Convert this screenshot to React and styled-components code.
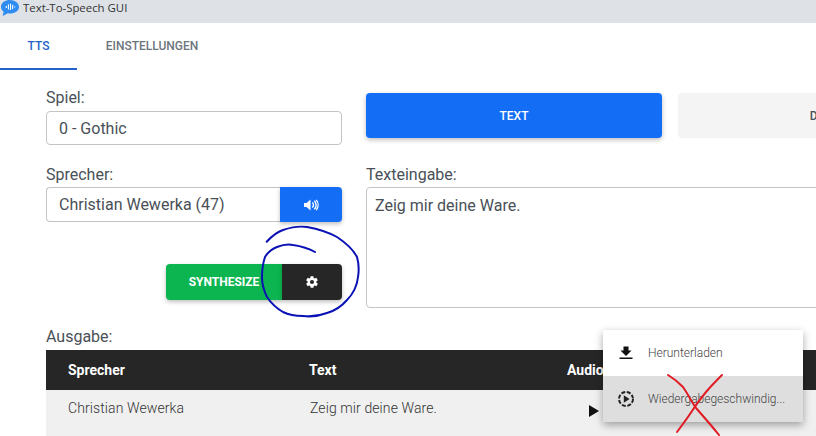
import React from "react";
import styled, { createGlobalStyle } from "styled-components";

const Global = createGlobalStyle`
  html, body { margin: 0; padding: 0; width: 816px; height: 436px; overflow: hidden; background: #fff; }
  body { font-family: Roboto, "Liberation Sans", sans-serif; color: #495057; }
  * { box-sizing: border-box; }
`;
const Page = styled.div`position: relative; width: 816px; height: 436px; overflow: hidden;`;
const TitleBar = styled.div`
  height: 23px; background: #dee1e6; display: flex; align-items: flex-start; gap: 4px;
  font: 11.4px/15px "Open Sans", "Liberation Sans", sans-serif; color: #333; padding-left: 1px;
`;
const TabBar = styled.div`display: flex; height: 47px;`;
const Tab = styled.div`
  width: ${p => p.$w}px; display: flex; align-items: center; justify-content: center;
  font-size: 12px; font-weight: 500;
  color: ${p => (p.$active ? "#2563c9" : "#6c757d")};
  border-bottom: 2px solid ${p => (p.$active ? "#2563c9" : "transparent")};
`;
const Content = styled.div`
  width: 1200px; padding: 18px 0 0 46px; display: grid; grid-template-columns: 296px 1fr; column-gap: 24px;
`;
const LeftCol = styled.div`display: flex; flex-direction: column;`;
const RightCol = styled.div`display: flex; flex-direction: column;`;
const Label = styled.div`font-size: 16px; line-height: 19px; color: #495057; margin-bottom: ${p => p.$mb ?? 4}px;`;
const Field = styled.div`
  height: 34px; border: 1px solid #c4c4c4; border-radius: 4px; padding: 0 12px; display: flex; align-items: center;
  font-size: 16px; color: #495057; background: #fff; flex: ${p => (p.$grow ? 1 : "none")};
`;
const Spacer = styled.div`height: ${p => p.$h}px; flex: none;`;
const SpeakerRow = styled.div`display: flex; height: 35px;`;
const SpeakerField = styled(Field)`height: 35px; border-radius: 4px 0 0 4px; border-right: 0;`;
const SoundButton = styled.div`
  width: 62px; background: #146ef5; border-radius: 0 4px 4px 0; display: flex; align-items: center; justify-content: center;
  color: #fff; box-shadow: 0 2px 4px rgba(0,0,0,.25);
`;
const ActionRow = styled.div`display: flex; justify-content: flex-end; height: 36px; margin-top: 42px;`;
const SynthButton = styled.div`
  width: 116px; background: #0db551; color: #fff; border-radius: 4px 0 0 4px; display: flex; align-items: center; justify-content: center;
  font-size: 12px; font-weight: 700; box-shadow: 0 2px 4px rgba(0,0,0,.25);
`;
const GearButton = styled.div`
  width: 60px; background: #262626; color: #fff; border-radius: 0 4px 4px 0; display: flex; align-items: center; justify-content: center;
  box-shadow: 0 2px 4px rgba(0,0,0,.25);
`;
const ModeRow = styled.div`display: flex; gap: 16px; height: 45px; margin-top: 5px;`;
const ModeButton = styled.div`
  width: 296px; border-radius: 4px; display: flex; align-items: center; justify-content: center; font-size: 12px; font-weight: 500;
  background: ${p => (p.$active ? "#146ef5" : "#f4f4f5")}; color: ${p => (p.$active ? "#fff" : "#495057")};
  box-shadow: ${p => (p.$active ? "0 2px 5px rgba(0,0,0,.25)" : "none")};
`;
const TextArea = styled.div`
  height: 121px; width: 600px; border: 1px solid #c4c4c4; border-radius: 4px; padding: 8px; font-size: 16px; line-height: 20px; color: #495057;
`;
const Output = styled.div`padding: 19px 0 0 46px; width: 1200px;`;
const TableHead = styled.div`
  height: 40px; background: #262626; color: #fff; display: grid; grid-template-columns: 241px 258px 1fr; align-items: center;
  padding-left: 22px; font-size: 14px; font-weight: 700;
`;
const TableRow = styled.div`
  height: 46px; background: #f0f0f0; display: grid; grid-template-columns: 241px 280px 1fr; align-items: start;
  padding: 10px 0 0 22px; line-height: 17px; font-size: 14px; font-weight: 300; color: #333; letter-spacing: .1px;
`;
const RowText = styled.span`margin-left: ${p => p.$ml ?? 0}px;`;
const PlayIcon = styled.svg`display: block; margin-top: 5px;`;
const Menu = styled.div`
  position: absolute; left: 603px; top: 330px; width: 200px; background: #fff; box-shadow: 0 3px 8px rgba(0,0,0,.35); display: flex; flex-direction: column;
`;
const MenuItem = styled.div`
  height: 46px; display: flex; align-items: center; padding-left: 14px; gap: 13px; font-size: 12px; font-weight: 300; color: #444;
  background: ${p => (p.$hover ? "#dedede" : "#fff")};
`;
const Ink = styled.svg`position: absolute; left: 0; top: 0; pointer-events: none;`;

const Logo = () => (
  <svg width="18" height="16" viewBox="0 0 17 15">
    <path d="M8.500 0C4 0 0 2.500 0 6.500c0 2 1 3.500 2.500 4.500L1.500 15l5-2.500c.7.100 1.300.200 2 .200 4.500 0 8.500-2.500 8.500-6.200S13 0 8.500 0z" fill="#2f8cf0" />
    <path d="M5 5.500v2M7 4v5M9 3.500v6M11 4.500v4M13 6v1" stroke="#fff" strokeWidth="1" />
  </svg>
);
const Speaker = () => (
  <svg width="15" height="12" viewBox="0 0 15 12" fill="#fff">
    <path d="M0 4h2.500L6.500.5v11L2.500 8H0z" />
    <path d="M8.300 3.500a3.200 3.200 0 0 1 0 5M10.300 1.800a5.800 5.800 0 0 1 0 8.400M12.200.9a8 8 0 0 1 0 10.200" stroke="#fff" strokeWidth="1.400" fill="none" />
  </svg>
);
const Gear = () => (
  <svg width="14" height="14" viewBox="0 0 24 24" fill="#fff">
    <path fillRule="evenodd" d="M19.400 13c.1-.3.100-.7.100-1s0-.7-.1-1l2.500-1.900-2.500-4.300-2.900 1.200c-.5-.4-1.100-.7-1.700-1L14.500 2h-5l-.4 3c-.6.300-1.200.6-1.700 1L4.500 4.800 2 9.100 4.600 11c-.1.300-.1.700-.1 1s0 .7.100 1L2 14.900l2.500 4.300 2.900-1.200c.5.400 1.100.7 1.700 1l.4 3h5l.4-3c.6-.3 1.200-.6 1.700-1l2.900 1.200 2.500-4.300zM12 15.500a3.500 3.500 0 1 1 0-7 3.500 3.500 0 0 1 0 7z" />
  </svg>
);
const Download = () => (
  <svg width="18" height="18" viewBox="0 0 18 18" fill="#111"><path d="M6.500 2.500h5v4h3L9 12 3.500 6.500h3zM2.500 13.500h13v1.600h-13z" /></svg>
);
const SpeedIcon = () => (
  <svg width="18" height="18" viewBox="0 0 18 18" fill="none">
    <circle cx="9" cy="9" r="7" stroke="#222" strokeWidth="2" strokeDasharray="4 1.600" />
    <path d="M6.800 5.200v7.600L12.600 9z" fill="#222" />
  </svg>
);

export default function App() {
  return (
    <Page>
      <Global />
      <TitleBar><Logo /><span>Text-To-Speech GUI</span></TitleBar>
      <TabBar>
        <Tab $w={77} $active>TTS</Tab>
        <Tab $w={150}>EINSTELLUNGEN</Tab>
      </TabBar>
      <Content>
        <LeftCol>
          <Label>Spiel:</Label>
          <Field>0 - Gothic</Field>
          <Spacer $h={20} />
          <Label $mb={3}>Sprecher:</Label>
          <SpeakerRow>
            <SpeakerField $grow>Christian Wewerka (47)</SpeakerField>
            <SoundButton><Speaker /></SoundButton>
          </SpeakerRow>
          <ActionRow>
            <SynthButton>SYNTHESIZE</SynthButton>
            <GearButton><Gear /></GearButton>
          </ActionRow>
        </LeftCol>
        <RightCol>
          <ModeRow>
            <ModeButton $active>TEXT</ModeButton>
            <ModeButton>DATEI</ModeButton>
          </ModeRow>
          <Spacer $h={27} />
          <Label $mb={3}>Texteingabe:</Label>
          <TextArea>Zeig mir deine Ware.</TextArea>
        </RightCol>
      </Content>
      <Output>
        <Label $mb={4}>Ausgabe:</Label>
        <TableHead><span>Sprecher</span><span>Text</span><span>Audio</span></TableHead>
        <TableRow>
          <span>Christian Wewerka</span>
          <RowText $ml={1}>Zeig mir deine Ware.</RowText>
          <PlayIcon width="10" height="12" viewBox="0 0 10 12"><path d="M0 0l10 6-10 6z" fill="#111" /></PlayIcon>
        </TableRow>
      </Output>
      <Menu>
        <MenuItem><Download /><span>Herunterladen</span></MenuItem>
        <MenuItem $hover><SpeedIcon /><span>Wiedergabegeschwindig...</span></MenuItem>
      </Menu>
      <Ink width="816" height="436" viewBox="0 0 816 436" fill="none">
        <path d="M266.700 241.700C272 236 277 232 283 230C292 227 300 226 307 227C318 229 328 232 337 237C346 243 353 249 357 257C359 264 359 271 358 277C357 286 353 294 347 300C341 307 334 311 327 313C319 316 311 317 303 316C296 316 289 315 283 312C276 308 271 303 267 297C264 291 262 284 262 277C262 270 263 263 265 257C268 252 272 249 277 247C282 245 288 244 293 245C300 246 308 248 315 252" stroke="#0a12b5" strokeWidth="2" strokeLinecap="round" />
        <path d="M668 375C673 378 678 382 683 387C688 394 691 401 696 408C703 416 711 425 719 435" stroke="#e01b24" strokeWidth="2" strokeLinecap="round" />
        <path d="M722 375C716 381 711 386 706 392C702 397 698 402 694 408C689 416 683 424 677 432" stroke="#e01b24" strokeWidth="2" strokeLinecap="round" />
      </Ink>
    </Page>
  );
}
